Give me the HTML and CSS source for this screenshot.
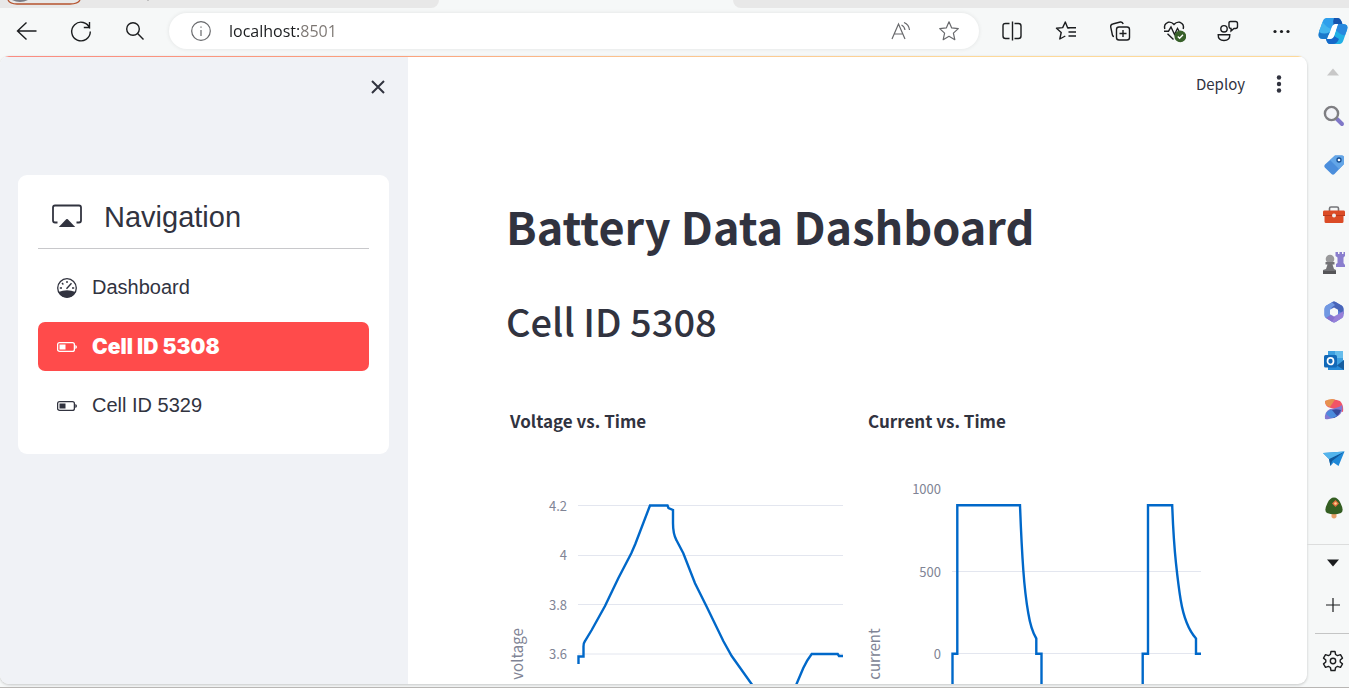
FILE: index.html
```html
<!DOCTYPE html>
<html lang="en">
<head>
<meta charset="utf-8">
<title>Battery Data Dashboard</title>
<link rel="stylesheet" href="styles.css">
</head>
<body>
<div class="browser">
  <div class="tabstrip">
    <div class="tabs-before">
      <svg width="160" height="8" viewBox="0 0 160 8" fill="none" aria-hidden="true">
        <path d="M8 0Q10 4 17 4H70Q78 4 80 0" stroke="#b5532e" stroke-width="1.3"/>
        <path d="M12 0Q20 4 28 0" fill="#7c7c84"/>
        <path d="M147 0h2" stroke="#999"/>
      </svg>
    </div>
    <div class="tab-active"></div>
    <div class="tabs-after"></div>
  </div>

  <header class="toolbar">
    <button class="tool" aria-label="Back"><svg width="24" height="24" viewBox="0 0 24 24"><path d="M21.5 12H2.500M11.500 3.500L2.500 12L11.500 20.500"/></svg></button>
    <button class="tool" aria-label="Refresh"><svg width="24" height="24" viewBox="0 0 24 24"><path d="M20.800 9.500A9.300 9.300 0 1 0 21.300 12.500M20.500 3V8.500H14.800"/></svg></button>
    <button class="tool" aria-label="Search"><svg width="24" height="24" viewBox="0 0 24 24"><circle cx="10" cy="10" r="6.300"/><path d="M14.600 14.600L20.500 20.500"/></svg></button>
    <div class="address">
      <button class="mini" aria-label="Site information"><svg width="22" height="22" viewBox="0 0 22 22"><circle cx="11" cy="11" r="9.300"/><path d="M11 10v6M11 6.400v1.400"/></svg></button>
      <input class="url" type="text" aria-label="Address" value="localhost:8501">
      <button class="mini" aria-label="Read aloud"><svg width="22" height="22" viewBox="0 0 22 22"><path d="M2 19L8.500 4L15 19M4.300 14H12.700M11.500 5Q14.500 6.500 15 10M14 2.500Q19 4.500 19.500 10"/></svg></button>
      <button class="mini" aria-label="Add to favorites"><svg width="22" height="22" viewBox="0 0 22 22"><path d="M11 1.800L13.700 7.900L20.300 8.600L15.400 13.100L16.800 19.700L11 16.300L5.200 19.700L6.600 13.100L1.700 8.600L8.300 7.900Z" stroke-linejoin="round"/></svg></button>
    </div>
    <button class="tool" aria-label="Split screen"><svg width="24" height="24" viewBox="0 0 24 24"><path d="M9.500 4.500H5.500Q3 4.500 3 7V17Q3 19.500 5.500 19.500H9.500M14.500 4.500H18.500Q21 4.500 21 7V17Q21 19.500 18.500 19.500H14.500M12.500 2.500V21.500"/></svg></button>
    <button class="tool" aria-label="Favorites"><svg width="24" height="24" viewBox="0 0 24 24"><path d="M15.500 9H13.700L11.300 3L8.700 8.600L2.500 9.300L7.200 13.500L5.800 20L11.300 17M14 8.800H22M14.500 13H22M14.500 17H22" stroke-linejoin="round"/></svg></button>
    <button class="tool" aria-label="Collections"><svg width="24" height="24" viewBox="0 0 24 24"><rect x="8.500" y="8" width="13" height="13" rx="2.500"/><path d="M15 11V18M11.500 14.500H18.500M6 17.500Q4.700 17.300 4.400 16L2.700 7.800Q2.500 5.500 4.700 5L12.300 3Q14.500 2.600 15.200 5"/></svg></button>
    <button class="tool" aria-label="Browser essentials"><svg width="24" height="24" viewBox="0 0 24 24"><path d="M2.800 10Q1.500 5 6 3.300Q9.500 2.500 12 5.500Q14.500 2.500 18 3.300Q22.500 5 21.200 10M2 12.200H6.500L9 8L12.500 15.500L15.500 9.500L17 12M5.500 14.800L11.500 20.500"/><circle cx="18.300" cy="17.300" r="5.200" fill="#38602a" stroke="#38602a"/><path d="M15.800 17.500L17.600 19.200L21 15.800" stroke="#fff"/></svg></button>
    <button class="tool" aria-label="Send feedback"><svg width="24" height="24" viewBox="0 0 24 24"><circle cx="8" cy="9.800" r="3.200"/><path d="M2.200 15.800H13.800Q14 21.500 8 21.500Q2 21.500 2.200 15.800ZM14.500 2.500H19.500Q21.500 2.500 21.500 4.500V7.500Q21.500 9.500 19.500 9.500H18L15 12V9.500Q13 9.300 13 7.500V4.500Q12.800 2.500 14.500 2.500Z"/></svg></button>
    <button class="tool" aria-label="Settings and more"><svg width="24" height="24" viewBox="0 0 24 24"><g fill="#1b1d1f" stroke="none"><circle cx="5" cy="12.500" r="1.600"/><circle cx="11.500" cy="12.500" r="1.600"/><circle cx="18" cy="12.500" r="1.600"/></g></svg></button>
    <button class="copilot" aria-label="Copilot"><svg width="32" height="32" viewBox="0 0 32 32">
      <path d="M9 3H21Q24 3.500 25 9H19Q16 9 15 12L13 18L8 24H6Q0 24 2 17L5.500 7Q6.500 3.500 9 3Z" fill="#2f9fec"/>
      <path d="M17 3H21Q24 3.500 25.500 9H19Q17.500 9 16.500 10Q15.500 6 17 3Z" fill="#1554ae"/>
      <path d="M2 17Q0 24 6 24H10L13 16Q7 18 3 14Z" fill="#1c79cb"/>
      <path d="M3 14L5.500 7Q9 12 14 14L13 17Q7 20 2 17Z" fill="#43b4ee"/>
      <path d="M23 29Q25.500 28.500 26.500 25L30 15Q32 9 26 9H21L17 21Q16 24 12.500 24H9Q10 29 13 29Z" fill="#21b0e5"/>
      <path d="M21 9H26Q32 9 30 15L28 20Q24 21 19 15Z" fill="#2788de"/>
      <path d="M9 24H12.500Q16 24 17 21L22 24Q20 29 16 29H13Q10 29 9 24Z" fill="#1768c9"/>
      <path d="M14.500 13Q16 9 19 9H21L17 21Q16 24 12.500 24H10.500Z" fill="#fff"/>
    </svg></button>
  </header>

  <div class="body">
    <div class="page">
      <div class="accent"></div>
      <div class="app">
        <aside class="sidebar">
          <div class="sidebar-top">
            <button class="close" aria-label="Close sidebar"><svg width="16" height="16" viewBox="0 0 16 16"><path d="M2 2L14 14M14 2L2 14"/></svg></button>
          </div>
          <nav class="card">
            <h2 class="nav-title">
              <svg width="30" height="30" viewBox="0 0 30 30" aria-hidden="true"><path d="M5.500 20.500H3Q1 20.500 1 18.500V5.500Q1 3.500 3 3.500H27Q29 3.500 29 5.500V18.500Q29 20.500 27 20.500H24.500" fill="none" stroke="#31333f" stroke-width="1.800"/><path d="M6.800 25L14.200 17.300Q15 16.600 15.800 17.300L23.200 25Z" fill="#31333f"/></svg>
              Navigation
            </h2>
            <a class="item" href="#dashboard">
              <svg width="20" height="20" viewBox="0 0 20 20" aria-hidden="true"><circle cx="10" cy="10" r="9.300" fill="none" stroke="#31333f" stroke-width="1.300"/><path d="M1.500 14Q10 10.500 18.500 14Q16 19.500 10 19.500Q4 19.500 1.500 14Z" fill="#31333f"/><path d="M10 3V5M5 5L6.400 6.400M2.800 10H5M15 10H17.200M9.500 10.700L14.500 5.300" stroke="#31333f" stroke-width="1.400"/></svg>
              Dashboard
            </a>
            <a class="item selected" href="#cell-5308" aria-current="page">
              <svg width="20" height="20" viewBox="0 0 20 20" aria-hidden="true"><rect x=".6" y="5.600" width="16.800" height="8.800" rx="2" fill="none" stroke="currentColor" stroke-width="1.300"/><path d="M2.500 7.500H8.500V12.500H2.500ZM18.300 8Q20 8.500 20 10Q20 11.500 18.300 12Z" fill="currentColor"/></svg>
              Cell ID 5308
            </a>
            <a class="item" href="#cell-5329">
              <svg width="20" height="20" viewBox="0 0 20 20" aria-hidden="true"><rect x=".6" y="5.600" width="16.800" height="8.800" rx="2" fill="none" stroke="currentColor" stroke-width="1.300"/><path d="M2.500 7.500H8.500V12.500H2.500ZM18.300 8Q20 8.500 20 10Q20 11.500 18.300 12Z" fill="currentColor"/></svg>
              Cell ID 5329
            </a>
          </nav>
        </aside>

        <main class="main">
          <div class="app-header">
            <button class="deploy">Deploy</button>
            <button class="menu" aria-label="Main menu"><svg width="6" height="18" viewBox="0 0 6 18"><g fill="#31333f"><circle cx="3" cy="2.500" r="2.200"/><circle cx="3" cy="9" r="2.200"/><circle cx="3" cy="15.500" r="2.200"/></g></svg></button>
          </div>
          <div class="content">
            <h1>Battery Data Dashboard</h1>
            <h2 class="cell">Cell ID 5308</h2>
            <div class="charts">
              <section class="chart">
                <h3>Voltage vs. Time</h3>
                <svg viewBox="0 0 342 214" role="img" aria-label="Voltage over time">
                  <path class="grid" d="M72 35.500H337M72 85.500H337M72 134.500H337M72 184H337"/>
                  <g class="ticks"><text x="61" y="41">4.2</text><text x="61" y="90">4</text><text x="61" y="140">3.8</text><text x="61" y="189">3.6</text></g>
                  <text class="axis" transform="translate(17 184) rotate(-90)">voltage</text>
                  <path class="line" transform="translate(1 0)" d="M71.500 194V186.500H76.500V176.500Q76.500 173 78 171L84.700 160L98 136L111.300 108.300L124.300 83.300L128.300 74L143 35.500H160.500L161.500 38L166 40V53.300Q166 64 169.500 70.300L176.300 83.300L188 113.300L199.700 136.700L216.300 171L224.700 186L246 216M288.700 216L296.300 198Q300 190 304.700 184H330.700L332 186H336"/>
                </svg>
              </section>
              <section class="chart">
                <h3>Current vs. Time</h3>
                <svg viewBox="0 0 342 214" role="img" aria-label="Current over time">
                  <path class="grid" d="M88 101.500H337M88 183.500H337"/>
                  <g class="ticks"><text x="77" y="24">1000</text><text x="77" y="107">500</text><text x="77" y="189">0</text></g>
                  <text class="axis" transform="translate(16 184) rotate(-90)">current</text>
                  <path class="line" transform="translate(1 0)" d="M87.500 216V183.700H92.300V35.300H155Q156.500 75 158.300 100T163.300 143.300Q166 160 171.300 168.500V183.700H176.500V216M277.700 216V183.700H283V35.300H307.200Q308.500 70 311 93.300T315.700 130Q320 156 331 168.500V183.700H336"/>
                </svg>
              </section>
            </div>
          </div>
        </main>
      </div>
    </div>

    <aside class="rail">
      <button class="rail-arrow" aria-label="Scroll up"><svg width="12" height="8" viewBox="0 0 12 8"><path d="M0 7.500L6 .5L12 7.500Z" fill="#c8c8c8"/></svg></button>
      <button class="rail-item" aria-label="Search"><svg width="22" height="22" viewBox="0 0 22 22"><path d="M14 14L19 19" stroke="#8078c8" stroke-width="4" stroke-linecap="round"/><circle cx="8.500" cy="8.500" r="6.600" fill="#f3f4f8" stroke="#7e7e82" stroke-width="2.400"/></svg></button>
      <button class="rail-item" aria-label="Shopping"><svg width="22" height="22" viewBox="0 0 22 22"><path d="M12 1.500H19Q21 1.500 21 3.500V10L11.500 20Q10 21.500 8.500 20L1.800 13.500Q.5 12 2 10.500Z" fill="#4b8edc"/><path d="M12 1.500H19Q21 1.500 21 3.500V10L16 15L7 6Z" fill="#63a6e8"/><circle cx="16" cy="6" r="2" fill="#fff" stroke="#174e91" stroke-width="1.300"/></svg></button>
      <button class="rail-item" aria-label="Tools"><svg width="22" height="22" viewBox="0 0 22 22"><path d="M6.500 8V5.500Q6.500 4 8 4H14Q15.500 4 15.500 5.500V8" fill="none" stroke="#747478" stroke-width="1.600"/><path d="M1 7.500H21Q22 7.500 22 9V12L20.500 13V18.500Q20.500 20 19 20H3Q1.500 20 1.500 18.500V13L0 12V9Q0 7.500 1 7.500Z" fill="#db4b26"/><path d="M0 12.500H22" stroke="#b83a1e"/><circle cx="11" cy="12.500" r="2" fill="#eee"/></svg></button>
      <button class="rail-item" aria-label="Games"><svg width="22" height="22" viewBox="0 0 22 22"><path d="M12.500 0H15V2H16.500V0H19V2H20.500V0H22V4L20.500 5.500V11L22 13V15H13V12L14.500 11V5.500L12.500 4Z" fill="#8a7ece"/><circle cx="7" cy="7" r="4.300" fill="#99999b"/><path d="M2.500 10H11.500V12.500H9.500L11 17L13 18V21.500H0V18L3 17L4.500 12.500H2.500Z" fill="#727276"/><path d="M0 19H13V22H0Z" fill="#555558"/></svg></button>
      <button class="rail-item" aria-label="Microsoft 365"><svg width="22" height="22" viewBox="0 0 22 22"><path d="M9 1.200Q11 0 13 1.200L19 4.800Q20.500 6 20.500 8V14Q20.500 16 19 17L13 20.800Q11 22 9 20.800L3 17Q1.500 16 1.500 14V8Q1.500 6 3 4.800Z" fill="#5b7fdb"/><path d="M9 1.200Q11 0 13 1.200L19 4.800Q20.500 6 20.500 8V13L14 9L8 6Z" fill="#4965b9"/><path d="M3 4.800L9 1.200L12 4L8 7V14L3 17Q1.500 16 1.500 14V8Q1.500 6 3 4.800Z" fill="#7198e2"/><path d="M20.500 13Q20.500 16 19 17L13 20.800Q11 22 9 20.800L8 16L14 14L20.500 10Z" fill="#9880d8"/><path d="M3 17L8 14L12 16L9 20.800Z" fill="#8771ce"/><path d="M11 6.500L15 8.800V13.200L11 15.500L7 13.200V8.800Z" fill="#f6f8f8"/></svg></button>
      <button class="rail-item" aria-label="Outlook"><svg width="22" height="22" viewBox="0 0 22 22"><path d="M5 1H20V17H5Z" fill="#3d9fe0"/><path d="M12 1H20V8H12Z" fill="#65bceb"/><path d="M5 11L13 16L21 10V20H5Z" fill="#258ad8"/><path d="M21 10V20L14 15.500Z" fill="#155d9f"/><rect x="1" y="5" width="13" height="12.500" rx="1.500" fill="#1269b8"/><ellipse cx="7.500" cy="11.200" rx="3" ry="3.300" fill="none" stroke="#fff" stroke-width="1.700"/></svg></button>
      <button class="rail-item" aria-label="Designer"><svg width="22" height="22" viewBox="0 0 22 22"><path d="M2 2Q11-1 17 2Q21 6 20 13L15 11L8 9Q2 8 2 2Z" fill="#f35467"/><path d="M2 2Q8-1 12 .5L7 8Q2 7 2 2Z" fill="#e6924f"/><path d="M19 6Q21 13 15 17Q9 21 2 20Q1 13 7 10Q15 9 19 6Z" fill="#8479d2"/><path d="M5 13Q10 9 18 11Q16 17 11 19Q7 17 5 13Z" fill="#374b9d"/><path d="M3 15Q5 11 9 11L14 17Q11 19 8 19Z" fill="#4b8bdd"/></svg></button>
      <button class="rail-item" aria-label="Drop"><svg width="22" height="22" viewBox="0 0 22 22"><path d="M0 5L21.500 3.500L15.500 18L10.500 14.500L7.500 18L6 11Z" fill="#2089d8"/><path d="M6 11L21.500 3.500L9 13L7.500 18Z" fill="#12599c"/><path d="M0 5L21.500 3.500L6 11Z" fill="#53b4ec"/></svg></button>
      <button class="rail-item" aria-label="Tree"><svg width="22" height="22" viewBox="0 0 22 22"><path d="M8.500 15H13.500V20Q11 23 8.500 20Z" fill="#e8a06a"/><path d="M11 .5Q15 .5 17.500 6Q21.500 14 18 16Q11 18.500 4 16Q.5 14 4.500 6Q7 .5 11 .5Z" fill="#345e22"/><path d="M12.500 3L16 6.500L12.500 10L9 6.500Z" fill="#e06d3e"/><circle cx="12.500" cy="6.500" r="1.300" fill="#ffd48a"/></svg></button>
      <div class="rail-foot">
        <button class="rail-arrow" aria-label="More apps"><svg width="12" height="8" viewBox="0 0 12 8"><path d="M0 .5H12L6 7.500Z" fill="#1b1d1f"/></svg></button>
        <button class="rail-item" aria-label="Customize"><svg width="16" height="16" viewBox="0 0 16 16"><path d="M8 1V15M1 8H15" stroke="#1b1d1f" stroke-width="1.200"/></svg></button>
      </div>
      <div class="rail-settings">
        <button class="rail-item" aria-label="Settings"><svg width="22" height="22" viewBox="0 0 22 22" fill="none" stroke="#1b1d1f" stroke-width="1.400" stroke-linejoin="round"><path d="M9 1.500H13L13.600 4.500L15.500 5.600L18.500 4.600L20.500 8.100L18.200 10V12L20.500 13.900L18.500 17.400L15.500 16.400L13.600 17.500L13 20.500H9L8.400 17.500L6.500 16.400L3.500 17.400L1.500 13.900L3.800 12V10L1.500 8.100L3.500 4.600L6.500 5.600L8.400 4.500Z"/><circle cx="11" cy="11" r="2.700"/></svg></button>
      </div>
    </aside>
  </div>
</div>
</body>
</html>
```
FILE: styles.css
```css
* { box-sizing: border-box; }

body {
  margin: 0;
  font-family: "Noto Sans CJK SC", "Open Sans", sans-serif;
  color: #31333f;
}

button {
  border: 0;
  padding: 0;
  background: none;
  color: inherit;
  font: inherit;
  display: flex;
  align-items: center;
  justify-content: center;
}

h1, h2, h3 { margin: 0; }

.browser {
  display: flex;
  flex-direction: column;
  height: 100vh;
  overflow: hidden;
  background: #f6f8f8;
  border-bottom: 1px solid #b8b6b4;
}

/* Tab strip */
.tabstrip { display: flex; flex: none; height: 8px; }
.tabs-before { width: 439px; background: #e8e8e8; border-bottom-right-radius: 8px; }
.tabs-before svg { display: block; }
.tab-active { width: 294px; }
.tabs-after { flex: 1; background: #e8e8e8; border-bottom-left-radius: 8px; }

/* Toolbar */
.toolbar { display: flex; flex: none; align-items: center; height: 48px; padding-bottom: 2px; }
.tool { width: 54px; height: 36px; flex: none; }
.tool svg { fill: none; stroke: #1b1d1f; stroke-width: 1.4; }
.copilot { width: 40px; flex: none; padding-left: 8px; }
.copilot svg { flex: none; }

.address {
  display: flex;
  flex: 1;
  align-items: center;
  height: 36px;
  margin: 0 6px 0 7px;
  padding: 0 6px 0 8px;
  border-radius: 18px;
  background: #fff;
  box-shadow: 0 0 4px rgba(0, 0, 0, .09);
}
.mini { width: 48px; height: 32px; flex: none; }
.mini svg { fill: none; stroke: #68696c; stroke-width: 1.2; }
.url {
  flex: 1;
  min-width: 0;
  margin-left: 4px;
  padding: 0;
  border: 0;
  font: 16px/24px "Open Sans", sans-serif;
  color: transparent;
  background: linear-gradient(90deg, #1b1d1f 70px, #7b7571 70px);
  background-clip: text;
  -webkit-background-clip: text;
}

/* Page frame */
.body { display: flex; flex: 1; min-height: 0; }
.page {
  display: flex;
  flex: 1;
  flex-direction: column;
  min-width: 0;
  margin-bottom: 3px;
  border-radius: 9px;
  overflow: hidden;
  background: #fff;
  box-shadow: 0 1px 3px rgba(0, 0, 0, .2);
}
.accent { flex: none; height: 1px; background: linear-gradient(90deg, #fa8c82, #fba07c 30%, #fbbf8c 45%, #fdd99a 75%); }
.app { display: flex; flex: 1; min-height: 0; }

/* Sidebar */
.sidebar { width: 408px; flex: none; padding: 0 19px 0 18px; background: #f0f2f6; }
.sidebar-top { display: flex; justify-content: flex-end; height: 118px; padding-top: 22px; }
.close { width: 22px; height: 16px; }
.close svg { fill: none; stroke: #31333f; stroke-width: 2; }
.card {
  display: flex;
  flex-direction: column;
  gap: 10px;
  padding: 15px 20px 24px;
  border-radius: 9px;
  background: #fff;
  font-family: "Liberation Sans", Arial, sans-serif;
}
.nav-title {
  display: flex;
  align-items: center;
  gap: 22px;
  height: 59px;
  margin-bottom: 4px;
  padding: 0 14px 4px;
  border-bottom: 1px solid #c8c8cb;
  font-size: 29px;
  font-weight: 400;
}
.item {
  display: flex;
  align-items: center;
  gap: 15px;
  height: 49px;
  padding: 0 19px;
  border-radius: 7px;
  color: #31333f;
  font-size: 20px;
  text-decoration: none;
}
.item.selected { background: #ff4b4b; color: #fff; font-family: Inter, "Liberation Sans", sans-serif; font-size: 21px; font-weight: 900; }

/* Main area */
.main { flex: 1; min-width: 0; overflow: hidden; }
.app-header { display: flex; justify-content: flex-end; align-items: center; gap: 31px; height: 54px; padding-right: 25px; }
.deploy { font-size: 15px; line-height: 24px; }
.content { padding: 87px 101px 0 98px; }
h1 { font-size: 45px; line-height: 56px; font-weight: 700; white-space: nowrap; }
.cell { margin-top: 40px; font-size: 38px; line-height: 54px; font-weight: 500; }
.charts { display: grid; grid-template-columns: 1fr 1fr; gap: 16px; margin-top: 61px; }
.chart h3 { padding-left: 4px; font-size: 17px; line-height: 24px; font-weight: 700; }
.chart svg { display: block; width: 100%; margin-top: 37px; }
.grid { stroke: #e3e6ef; stroke-width: 1; }
.line { fill: none; stroke: #0068c9; stroke-width: 2.4; }
.ticks { fill: #808495; font-size: 13px; text-anchor: end; }
.axis { fill: #808495; font-size: 15px; text-anchor: middle; }

/* Right rail */
.rail { display: flex; flex-direction: column; flex: none; width: 42px; }
.rail button { width: 100%; padding-left: 11px; }
.rail svg { flex: none; }
.rail .rail-arrow { height: 35px; flex: none; padding: 0 0 3px 9px; }
.rail-item { height: 49px; flex: none; }
.rail-foot { margin-top: 12px; border-top: 1px solid #dcdddd; }
.rail .rail-foot .rail-arrow { padding: 0 0 0 9px; }
.rail .rail-foot .rail-item { padding-left: 9px; }
.rail-settings { flex: 1; margin: 4px 0 0 8px; border-top: 1px solid #c4c5c5; }
.rail .rail-settings .rail-item { height: 54px; padding-left: 1px; }
```
